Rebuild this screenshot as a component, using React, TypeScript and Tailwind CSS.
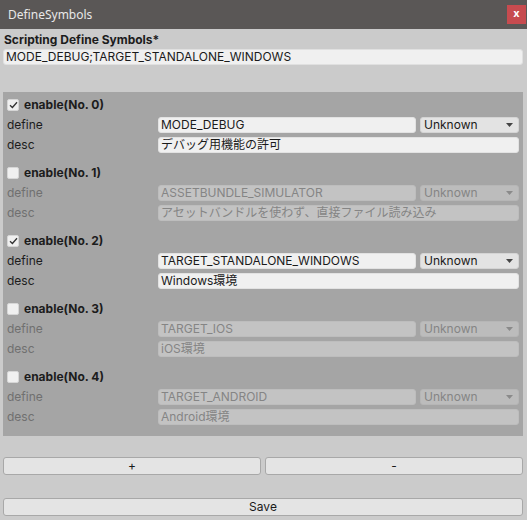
import React from 'react';

type Symbol = {
  enabled: boolean;
  define: string;
  desc: string;
};

const symbols: Symbol[] = [
  { enabled: true, define: 'MODE_DEBUG', desc: 'デバッグ用機能の許可' },
  { enabled: false, define: 'ASSETBUNDLE_SIMULATOR', desc: 'アセットバンドルを使わず、直接ファイル読み込み' },
  { enabled: true, define: 'TARGET_STANDALONE_WINDOWS', desc: 'Windows環境' },
  { enabled: false, define: 'TARGET_IOS', desc: 'iOS環境' },
  { enabled: false, define: 'TARGET_ANDROID', desc: 'Android環境' },
];

const font = { fontFamily: 'Inter, "Noto Sans CJK JP", sans-serif' };

function Checkbox({ checked }: { checked: boolean }) {
  return (
    <div className="w-[12px] h-[12px] rounded-[2px] bg-[#f0f0f0] border border-[#d6d6d6] flex items-center justify-center">
      {checked && (
        <svg width="9" height="8" viewBox="0 0 9 8">
          <path d="M1 4.2 L3.4 6.5 L8 1.2" fill="none" stroke="#333" strokeWidth="1.3" />
        </svg>
      )}
    </div>
  );
}

function SymbolGroup({ item, index }: { item: Symbol; index: number }) {
  const on = item.enabled;
  const label = on ? 'text-[#1c1c1c]' : 'text-[#707070]';
  const field = on
    ? 'bg-[#f0f0f0] border-[#e2e2e2] text-[#1a1a1a]'
    : 'bg-[#c3c3c3] border-[#bdbdbd] text-[#858585]';
  const popup = on
    ? 'bg-[#e3e3e3] border-[#d4d4d4] text-[#1a1a1a]'
    : 'bg-[#bcbcbc] border-[#b6b6b6] text-[#858585]';

  return (
    <div className="flex flex-col mb-[8px] last:mb-0">
      <div className="h-[20px] flex items-center">
        <Checkbox checked={on} />
        <span className="ml-[5px] font-bold text-[12px] text-[#1c1c1c]">enable(No. {index})</span>
      </div>
      <div className="h-[20px] flex items-center">
        <span className={`w-[151px] shrink-0 text-[12px] ${label}`}>define</span>
        <div className={`flex-1 h-[16px] rounded-[3px] border px-[2px] flex items-center text-[12px] leading-none ${field}`}>
          {item.define}
        </div>
        <div className={`ml-[4px] w-[99px] h-[16px] rounded-[3px] border pl-[3px] pr-[5px] flex items-center justify-between text-[12px] leading-none ${popup}`}>
          <span>Unknown</span>
          <svg width="7" height="4" viewBox="0 0 7 4">
            <path d="M0 0 H7 L3.5 4 Z" fill={on ? '#444' : '#8a8a8a'} />
          </svg>
        </div>
      </div>
      <div className="h-[20px] flex items-center">
        <span className={`w-[151px] shrink-0 text-[12px] ${label}`}>desc</span>
        <div className={`flex-1 h-[16px] rounded-[3px] border px-[2px] flex items-center text-[12px] leading-none ${field}`}>
          {item.desc}
        </div>
      </div>
    </div>
  );
}

export default function App() {
  return (
    <div className="w-[527px] h-[520px] bg-[#cbcbcb] flex flex-col overflow-hidden" style={font}>
      {/* Title bar */}
      <div className="h-[29px] shrink-0 bg-[#5a5756] flex items-center justify-between pl-[8px] pr-[1px]">
        <span className="text-[12px] text-[#e8e8e8]" style={{ fontFamily: '"Noto Sans", sans-serif' }}>
          DefineSymbols
        </span>
        <div className="w-[19px] h-[19px] bg-[#c74b4f] flex items-center justify-center text-white text-[11px] font-bold leading-none pb-[2px]">
          x
        </div>
      </div>

      <div className="flex flex-col pl-[3px] pr-[4px]">
        <div className="h-[19px] mt-[1px] flex items-center pl-[1px] font-bold text-[12px] text-[#1c1c1c]">
          Scripting Define Symbols*
        </div>
        <div className="h-[16px] rounded-[3px] bg-[#f0f0f0] border border-[#e0e0e0] px-[2px] flex items-center text-[12px] leading-none text-[#1a1a1a]">
          MODE_DEBUG;TARGET_STANDALONE_WINDOWS
        </div>

        {/* Symbol list */}
        <div className="mt-[27px] bg-[#a5a5a5] pt-[3px] pb-[9px] px-[4px] flex flex-col">
          {symbols.map((s, i) => (
            <SymbolGroup key={i} item={s} index={i} />
          ))}
        </div>

        <div className="mt-[21px] flex gap-[4px]">
          <button className="flex-1 h-[18px] rounded-[3px] bg-[#e4e4e4] border border-[#a8a8a8] text-[12px] leading-none text-[#1a1a1a]">
            +
          </button>
          <button className="flex-1 h-[18px] rounded-[3px] bg-[#e4e4e4] border border-[#a8a8a8] text-[12px] leading-none text-[#1a1a1a]">
            -
          </button>
        </div>

        <button className="mt-[23px] h-[18px] rounded-[3px] bg-[#e4e4e4] border border-[#a8a8a8] text-[12px] leading-none text-[#1a1a1a]">
          Save
        </button>
      </div>
    </div>
  );
}
